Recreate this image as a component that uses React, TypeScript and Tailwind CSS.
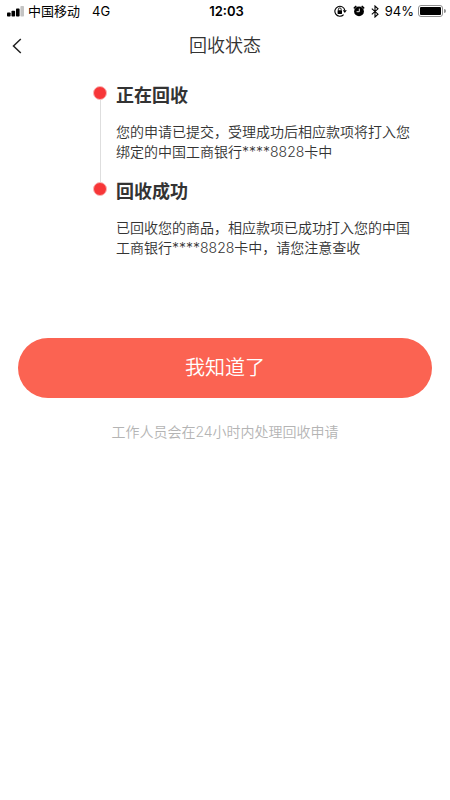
interface Step {
  title: string;
  description: string;
}

const steps: Step[] = [
  {
    title: "正在回收",
    description:
      "您的申请已提交，受理成功后相应款项将打入您绑定的中国工商银行****8828卡中",
  },
  {
    title: "回收成功",
    description:
      "已回收您的商品，相应款项已成功打入您的中国工商银行****8828卡中，请您注意查收",
  },
];

function SignalIcon() {
  return (
    <svg width="17" height="11" viewBox="0 0 17 11" aria-hidden="true">
      <rect x="0" y="6.4" width="3.6" height="4.2" rx="0.8" />
      <rect x="4.5" y="4.8" width="3.6" height="5.8" rx="0.8" />
      <rect x="9" y="2.6" width="3.6" height="8" rx="0.8" />
      <rect x="13.4" y="0" width="3.6" height="10.6" rx="0.8" fill="#c4c4c4" />
    </svg>
  );
}

function RotationLockIcon() {
  return (
    <svg width="13" height="12" viewBox="0 0 13 12" aria-hidden="true">
      <path
        d="M9.6 9.6A5 5 0 1 1 10.8 5.4"
        fill="none"
        stroke="#000"
        strokeWidth="1.1"
      />
      <path d="M8.8 5.3h4L10.8 8z" />
      <rect x="3.6" y="5.3" width="4.4" height="3.6" rx="0.4" />
      <path
        d="M4.4 5.5V4.3a1.4 1.4 0 0 1 2.8 0v1.2"
        fill="none"
        stroke="#000"
        strokeWidth="0.9"
      />
    </svg>
  );
}

function AlarmIcon() {
  return (
    <svg width="12" height="12" viewBox="0 0 12 12" aria-hidden="true">
      <circle cx="6" cy="6.4" r="4.9" />
      <path
        d="M1.4 2.8 2.8 1.5M10.6 2.8 9.2 1.5"
        stroke="#000"
        strokeWidth="1.7"
        strokeLinecap="round"
      />
      <path
        d="M6.3 4v2.7H4"
        fill="none"
        stroke="#fff"
        strokeWidth="0.9"
        strokeLinecap="round"
      />
    </svg>
  );
}

function BluetoothIcon() {
  return (
    <svg width="8" height="13" viewBox="0 0 8 13" aria-hidden="true">
      <path
        d="M0.8 3.7 7 9.2 4 12V1l3 2.8L0.8 9.3"
        fill="none"
        stroke="#000"
        strokeWidth="1.1"
      />
    </svg>
  );
}

function BatteryIcon() {
  return (
    <svg width="28" height="12" viewBox="0 0 28 12" aria-hidden="true">
      <rect
        x="0.5"
        y="0.5"
        width="24"
        height="11"
        rx="2.5"
        fill="none"
        stroke="#8f8f8f"
      />
      <rect x="2" y="2" width="21" height="8" rx="1" />
      <path d="M26 4a2 2 0 0 1 0 4z" fill="#8f8f8f" />
    </svg>
  );
}

function StatusBar() {
  return (
    <div className="grid h-[22px] grid-cols-[1fr_auto_1fr] items-center pr-1 pl-[7px] text-[13px] leading-none text-black">
      <div className="flex items-center gap-1">
        <SignalIcon />
        <span>中国移动</span>
        <span className="ml-2">4G</span>
      </div>
      <span className="font-semibold">12:03</span>
      <div className="flex items-center justify-end gap-1">
        <div className="mr-[2px] flex items-center gap-[6px]">
          <RotationLockIcon />
          <AlarmIcon />
          <BluetoothIcon />
        </div>
        <span>94%</span>
        <BatteryIcon />
      </div>
    </div>
  );
}

function NavBar() {
  return (
    <header className="grid h-12 grid-cols-[1fr_auto_1fr] items-center">
      <button type="button" aria-label="返回" className="w-10 pl-3">
        <svg width="10" height="16" viewBox="0 0 10 16" aria-hidden="true">
          <path
            d="M8.8 1 1.5 8l7.3 7"
            fill="none"
            stroke="#222"
            strokeWidth="1.5"
          />
        </svg>
      </button>
      <h1 className="text-[18px] leading-6 font-[350]">回收状态</h1>
    </header>
  );
}

function TimelineStep({ step, isLast }: { step: Step; isLast: boolean }) {
  return (
    <li className="flex gap-2">
      <div className="flex w-4 shrink-0 flex-col items-center pt-1">
        <span className="size-[14px] shrink-0 rounded-full border border-[#fbb5b5] bg-[#f73638]" />
        {!isLast ? <span className="-mb-1 w-px grow bg-[#dedede]" /> : null}
      </div>
      <div className={isLast ? "" : "pb-4"}>
        <h2 className="text-[18px] leading-7 font-bold">{step.title}</h2>
        <p className="mt-3 text-[14px] leading-5 font-[350]">
          {step.description}
        </p>
      </div>
    </li>
  );
}

export default function App() {
  return (
    <div className="min-h-screen bg-white font-['Inter','Noto_Sans_CJK_SC',sans-serif] text-[#333]">
      <StatusBar />
      <NavBar />
      <main>
        <ol className="mt-3 mr-[30px] ml-[92px]">
          {steps.map((step, index) => (
            <TimelineStep
              key={step.title}
              step={step}
              isLast={index === steps.length - 1}
            />
          ))}
        </ol>
        <div className="mt-20 px-[18px]">
          <button
            type="button"
            className="h-[60px] w-full rounded-full bg-[#fb6352] text-[20px] font-[350] text-white"
          >
            我知道了
          </button>
          <p className="mt-6 text-center text-[14px] leading-5 font-[350] text-[#b4b4b4]">
            工作人员会在24小时内处理回收申请
          </p>
        </div>
      </main>
    </div>
  );
}
